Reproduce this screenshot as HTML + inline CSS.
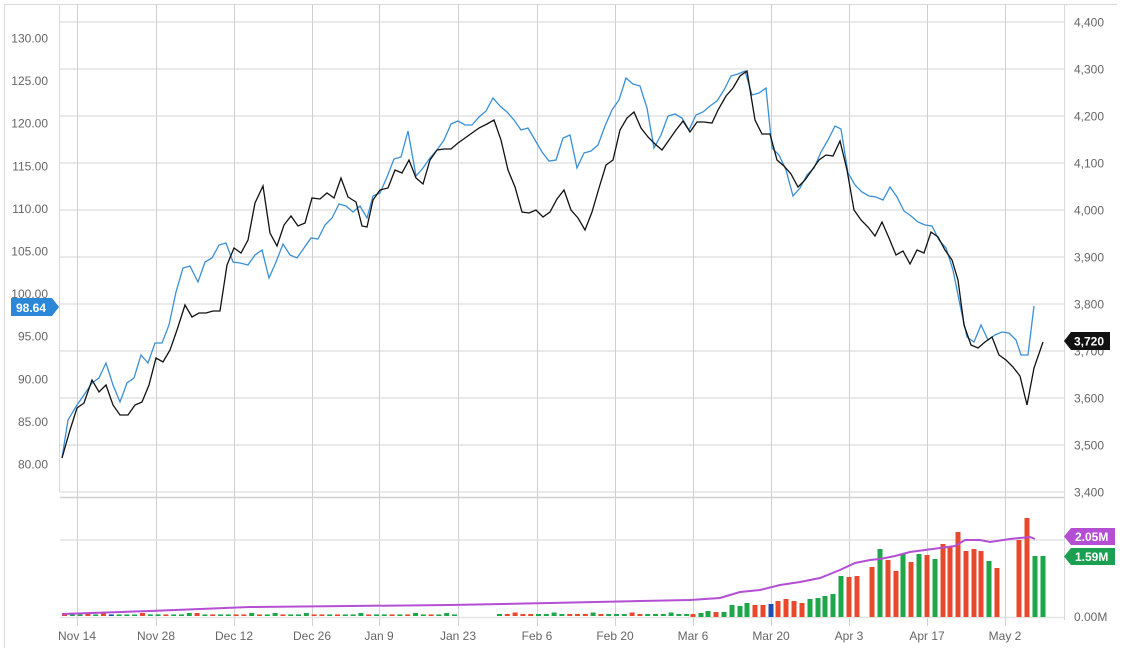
<!DOCTYPE html>
<html><head><meta charset="utf-8"><style>
html,body{margin:0;padding:0;background:#fff;width:1126px;height:656px;overflow:hidden}
svg{display:block;font-family:"Liberation Sans",sans-serif}
</style></head><body>
<svg id="s" width="1126" height="656" viewBox="0 0 1126 656" xmlns="http://www.w3.org/2000/svg">
<rect x="0" y="0" width="1126" height="656" fill="#fff"/>
<g stroke="#d9d9d9" stroke-width="1">
<line x1="4.5" y1="4.5" x2="1117" y2="4.5"/>
<line x1="4.5" y1="4.5" x2="4.5" y2="648"/>
<line x1="59.5" y1="4.5" x2="59.5" y2="492"/>
<line x1="1064.5" y1="4.5" x2="1064.5" y2="620"/>
</g>
<g stroke="#e3e3e3" stroke-width="1.5" id="hg"></g>
<g stroke="#d0d0d0" stroke-width="1" id="vg"></g>
<line x1="60" y1="497.5" x2="1064" y2="497.5" stroke="#d0d0d0" stroke-width="1.5"/>
<line x1="60" y1="540" x2="1064" y2="540" stroke="#e3e3e3" stroke-width="1.5"/>
<line x1="60" y1="617.5" x2="1064" y2="617.5" stroke="#e3e3e3" stroke-width="1.5"/>
<g id="bars"></g>
<g font-size="12" fill="#666" id="lbl"></g>
<polyline fill="none" stroke="#b44fd3" stroke-width="2" points="62,614 150,611 250,607 350,606 450,605 550,603 690,600 720,598 740,592 760,590 780,585 800,582 820,578 840,570 855,563 870,560 880,559 895,556 910,552 925,550 940,548 955,546 965,540 980,540 990,542 1010,539 1030,537 1035,539"/>
<polyline fill="none" stroke="#3a8fd6" stroke-width="1.3" points="62,458 68,420 77,405 84,395 92,383 99,378 106,363 113,385 120,402 127,383 134,378 141,355 148,363 155,343 162,343 169,325 176,292 183,268 190,266 198,282 205,262 212,258 219,245 226,243 233,262 240,263 248,265 255,255 262,250 269,278 276,262 283,244 290,255 297,258 304,248 311,238 318,239 325,225 332,218 339,204 346,206 353,212 360,206 367,218 373,196 380,193 387,177 394,159 401,157 408,131 416,176 423,168 430,158 437,150 444,140 451,124 458,121 465,125 472,125 479,117 486,111 493,98 500,106 507,112 514,120 521,130 528,128 535,140 542,152 549,161 556,160 563,138 570,135 577,168 584,153 591,151 598,145 605,126 612,110 619,100 626,78 633,84 640,86 647,108 654,148 661,135 668,116 675,114 682,118 689,130 696,115 703,112 710,106 717,101 724,90 731,76 738,74 745,71 752,95 759,93 766,88 772,148 779,155 786,170 793,196 800,188 807,175 814,168 821,152 828,140 835,126 841,129 848,173 855,185 862,192 869,196 876,197 883,200 890,187 897,197 904,211 911,216 918,222 925,225 932,226 939,240 946,248 953,270 960,305 967,337 974,342 981,325 988,340 995,335 1002,332 1009,333 1016,340 1021,355 1028,355 1034,306"/>
<polyline fill="none" stroke="#111" stroke-width="1.3" points="62,458 70,430 77,408 84,403 92,380 99,392 106,385 113,405 120,415 128,415 135,405 142,402 149,385 156,358 163,362 170,350 177,330 185,305 192,317 199,313 206,313 213,311 220,311 227,265 234,248 241,253 248,240 255,203 263,186 270,233 277,246 284,225 291,216 298,226 305,223 312,198 320,199 327,193 334,198 341,178 348,197 356,202 362,226 367,227 373,200 380,190 388,188 395,170 402,173 409,160 416,178 423,184 430,160 437,150 444,149 451,149 458,143 465,138 472,133 479,128 487,124 494,120 501,140 508,170 515,187 522,212 529,213 536,210 543,217 550,212 557,199 564,190 571,210 578,218 585,230 592,212 599,188 606,165 613,160 620,130 627,118 634,112 641,128 648,137 655,144 662,150 669,140 676,130 683,121 690,132 697,122 704,122 712,123 718,110 726,96 733,88 740,76 747,71 755,120 762,134 770,134 777,160 784,166 791,174 798,187 805,180 812,170 819,160 826,155 833,156 840,141 847,170 854,210 861,220 868,227 875,236 882,222 889,238 896,255 903,251 910,264 917,250 924,253 931,232 938,237 945,250 952,260 958,280 964,325 971,345 978,348 985,342 992,337 999,355 1006,360 1013,367 1020,376 1027,405 1034,368 1043,342"/>
<path d="M11,298 H52 L59,307 L52,316 H11 Z" fill="#2b87d8"/>
<text x="16" y="312" font-size="12" font-weight="bold" fill="#fff">98.64</text>
<path d="M1071,332 H1110 V350 H1071 L1064,341 Z" fill="#111"/>
<text x="1074" y="345.5" font-size="12" font-weight="bold" fill="#fff">3,720</text>
<path d="M1071,528 H1115 V545 H1071 L1064,536.5 Z" fill="#b44fd3"/>
<text x="1075" y="541" font-size="12" font-weight="bold" fill="#fff">2.05M</text>
<path d="M1071,548 H1115 V565 H1071 L1064,556.5 Z" fill="#1aa050"/>
<text x="1075" y="561" font-size="12" font-weight="bold" fill="#fff">1.59M</text>
</svg>
<script>
var NS="http://www.w3.org/2000/svg";
function el(p,t,a,txt){var e=document.createElementNS(NS,t);for(var k in a)e.setAttribute(k,a[k]);if(txt)e.textContent=txt;document.getElementById(p).appendChild(e);}
for(var i=0;i<11;i++){var y=22+i*47;el('hg','line',{x1:60,y1:y,x2:1064,y2:y});}
var vx=[77,156,234,312,379,458,537,615,693,771,849,927,1005];
var vl=["Nov 14","Nov 28","Dec 12","Dec 26","Jan 9","Jan 23","Feb 6","Feb 20","Mar 6","Mar 20","Apr 3","Apr 17","May 2"];
vx.forEach(function(x,i){el('vg','line',{x1:x+.5,y1:4,x2:x+.5,y2:626});el('lbl','text',{x:x,y:640,'text-anchor':'middle'},vl[i]);});
var L=["130.00","125.00","120.00","115.00","110.00","105.00","100.00","95.00","90.00","85.00","80.00"];
L.forEach(function(t,i){el('lbl','text',{x:48,y:42.5+i*42.6,'text-anchor':'end'},t);});
var R=["4,400","4,300","4,200","4,100","4,000","3,900","3,800","3,700","3,600","3,500","3,400"];
R.forEach(function(t,i){el('lbl','text',{x:1074,y:26.5+i*47},t);});
el('lbl','text',{x:1074,y:621},"0.00M");
var C={r:"#e8492c",g:"#1ea64a",b:"#1c4fb0"};
// tiny bars
var seq="rggrgrbgggrggrgggrgrggrrgrggrgggrrgrgggrggrgrggrgggb";
var x=62,k=0;
while(x<455){var c=seq[k%seq.length];var h=(k%7==3||k%11==5)?3:1.6;el('bars','rect',{x:x,y:616-h,width:5,height:h,fill:C[c]});x+=7.8;k++;}
x=497;k=0;var seq2="grrrrggggrrrgrgggrrggggggrrrgggrgg";
while(x<690){var c=seq2[k%seq2.length];var h=(k%5==2)?3.5:2;el('bars','rect',{x:x,y:616-h,width:5,height:h,fill:C[c]});x+=7.8;k++;}
var B=[[693,614,'r'],[701,613,'g'],[708,611,'g'],[716,612,'r'],[724,612,'g'],[732,605,'g'],[740,606,'g'],[747,603,'g'],[755,605,'r'],[763,605,'r'],[771,604,'b'],[778,601,'r'],[786,599,'r'],[794,601,'r'],[802,603,'r'],[810,599,'g'],[818,598,'g'],[825,596,'g'],[833,594,'g'],[841,576,'g'],[849,577,'r'],[857,576,'r'],[872,567,'r'],[880,549,'g'],[888,560,'r'],[896,571,'r'],[903,554,'g'],[911,562,'r'],[919,554,'g'],[927,555,'r'],[935,559,'g'],[943,544,'r'],[950,546,'r'],[958,532,'r'],[966,551,'r'],[974,549,'r'],[981,551,'r'],[989,561,'g'],[997,568,'r'],[1019,540,'r'],[1027,518,'r'],[1035,556,'g'],[1043,556,'g']];
B.forEach(function(b){el('bars','rect',{x:b[0]-2.5,y:b[1],width:5,height:617-b[1],fill:C[b[2]]});});
</script>
</body></html>
